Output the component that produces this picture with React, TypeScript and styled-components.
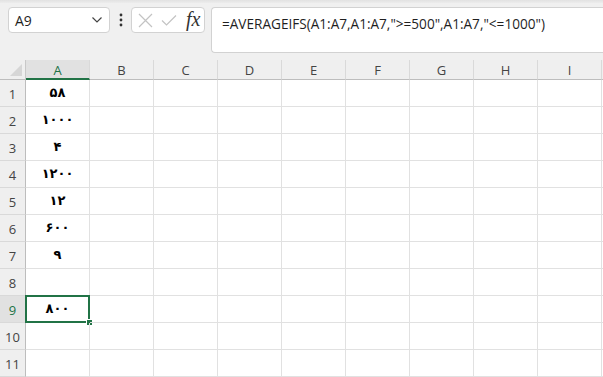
import React from "react";
import styled, { createGlobalStyle, css } from "styled-components";

const GlobalStyle = createGlobalStyle`
  html, body { margin: 0; padding: 0; background: #ffffff; overflow: hidden; }
  * { box-sizing: border-box; }
`;

const UI_FONT = `"Segoe UI", "Open Sans", "Noto Sans", "DejaVu Sans", sans-serif`;
const GREEN = "#217346";

const Page = styled.div`
  width: 603px;
  height: 377px;
  display: flex;
  flex-direction: column;
  background: #f0f0f0;
  font-family: ${UI_FONT};
  overflow: hidden;
`;

const TopStrip = styled.div`
  height: 3px;
  background: linear-gradient(#e2e2e2, #ececec);
  flex: none;
`;

const FormulaBar = styled.div`
  height: 57px;
  flex: none;
  display: flex;
  align-items: flex-start;
  padding: 4px 0 0 8px;
`;

const NameBox = styled.div`
  width: 102px;
  height: 26px;
  background: #ffffff;
  border: 1px solid #d2d2d2;
  border-radius: 4px;
  display: flex;
  align-items: center;
  justify-content: space-between;
  padding: 0 6px 0 6px;
  font-size: 14px;
  color: #1f1f1f;
`;

const Dots = styled.div`
  width: 21px;
  height: 26px;
  display: flex;
  align-items: center;
  justify-content: center;
`;

const ButtonBox = styled.div`
  width: 74px;
  height: 26px;
  background: #ffffff;
  border: 1px solid #d2d2d2;
  border-radius: 4px;
  display: flex;
  align-items: center;
  padding: 0 0 0 6px;
  gap: 8px;
`;

const Fx = styled.span`
  font-family: "Liberation Serif", "DejaVu Serif", serif;
  font-style: italic;
  font-size: 20px;
  color: #333;
  line-height: 1;
  margin-left: 1px;
  margin-top: -2px;
`;

const FormulaInput = styled.div`
  margin-left: 6px;
  flex: 1;
  height: 46px;
  background: #ffffff;
  border: 1px solid #d2d2d2;
  border-right: none;
  border-radius: 4px 0 0 4px;
  padding: 6px 0 0 10px;
  font-size: 13.6px;
  color: #1f1f1f;
  white-space: nowrap;
`;

const Sheet = styled.div`
  flex: 1;
  display: grid;
  grid-template-columns: 26px repeat(9, 64px) 1fr;
  grid-template-rows: 20px repeat(11, 27px);
  background: #ffffff;
`;

const Corner = styled.div`
  background: #efefef;
  border-right: 1px solid #c8c8c8;
  border-bottom: 1px solid #bdbdbd;
  position: relative;
`;

const CornerTri = styled.div`
  position: absolute;
  right: 3px;
  bottom: 3px;
  width: 0;
  height: 0;
  border-left: 12px solid transparent;
  border-bottom: 12px solid #d6d6d6;
`;

const ColHead = styled.div<{ $sel?: boolean }>`
  background: #efefef;
  border-right: 1px solid #d9d9d9;
  border-bottom: 1px solid #bdbdbd;
  display: flex;
  align-items: center;
  justify-content: center;
  font-size: 13px;
  color: #444;
  padding-top: 1px;
  ${(p) =>
    p.$sel &&
    css`
      background: #e1e1e1;
      color: ${GREEN};
      border-bottom: 2px solid ${GREEN};
    `}
`;

const RowHead = styled.div<{ $sel?: boolean }>`
  background: #efefef;
  border-right: 1px solid #bdbdbd;
  border-bottom: 1px solid #d9d9d9;
  display: flex;
  align-items: flex-end;
  justify-content: center;
  padding-bottom: 3px;
  font-size: 13px;
  color: #444;
  ${(p) =>
    p.$sel &&
    css`
      background: #e1e1e1;
      color: ${GREEN};
    `}
`;

const Cell = styled.div`
  position: relative;
  border-right: 1px solid #e1e1e1;
  border-bottom: 1px solid #e1e1e1;
  display: flex;
  align-items: center;
  justify-content: center;
  font-family: "DejaVu Sans", sans-serif;
  font-weight: bold;
  font-size: 13px;
  letter-spacing: -1px;
  color: #000;
  padding-bottom: 1px;
`;

const Filler = styled.div`
  border-bottom: 1px solid #e1e1e1;
`;

const HeadFiller = styled.div`
  background: #efefef;
  border-bottom: 1px solid #bdbdbd;
`;

const Selection = styled.div`
  position: absolute;
  top: -1px;
  left: -1px;
  right: -1px;
  bottom: -1px;
  border: 2px solid ${GREEN};
  pointer-events: none;
`;

const FillHandle = styled.div`
  position: absolute;
  right: -5px;
  bottom: -5px;
  width: 7px;
  height: 7px;
  background: ${GREEN};
  border: 1px solid #ffffff;
`;

const cols = ["A", "B", "C", "D", "E", "F", "G", "H", "I"];
const values: Record<number, string> = {
  1: "۵۸",
  2: "۱۰۰۰",
  3: "۴",
  4: "۱۲۰۰",
  5: "۱۲",
  6: "۶۰۰",
  7: "۹",
  9: "۸۰۰",
};

export default function App() {
  const rows = Array.from({ length: 11 }, (_, i) => i + 1);
  return (
    <>
      <GlobalStyle />
      <Page>
        <TopStrip />
        <FormulaBar>
          <NameBox>
            <span>A9</span>
            <svg width="12" height="8" viewBox="0 0 12 8">
              <path d="M1.5 1.5 L6 6 L10.5 1.5" fill="none" stroke="#444" strokeWidth="1.2" />
            </svg>
          </NameBox>
          <Dots>
            <svg width="4" height="14" viewBox="0 0 4 14">
              <circle cx="2" cy="2" r="1.4" fill="#333" />
              <circle cx="2" cy="7" r="1.4" fill="#333" />
              <circle cx="2" cy="12" r="1.4" fill="#333" />
            </svg>
          </Dots>
          <ButtonBox>
            <svg width="15" height="15" viewBox="0 0 15 15">
              <path d="M1 1 L14 14 M14 1 L1 14" stroke="#c3c3c3" strokeWidth="1.2" />
            </svg>
            <svg width="16" height="13" viewBox="0 0 16 13">
              <path d="M1 6.5 L5.5 11 L15 1.5" fill="none" stroke="#c3c3c3" strokeWidth="1.2" />
            </svg>
            <Fx>fx</Fx>
          </ButtonBox>
          <FormulaInput>=AVERAGEIFS(A1:A7,A1:A7,"&gt;=500",A1:A7,"&lt;=1000")</FormulaInput>
        </FormulaBar>
        <Sheet>
          <Corner>
            <CornerTri />
          </Corner>
          {cols.map((c) => (
            <ColHead key={c} $sel={c === "A"}>
              {c}
            </ColHead>
          ))}
          <HeadFiller />
          {rows.map((r) => (
            <React.Fragment key={r}>
              <RowHead $sel={r === 9}>{r}</RowHead>
              {cols.map((c) => (
                <Cell key={c}>
                  {c === "A" ? values[r] ?? "" : ""}
                  {c === "A" && r === 9 && (
                    <Selection>
                      <FillHandle />
                    </Selection>
                  )}
                </Cell>
              ))}
              <Filler />
            </React.Fragment>
          ))}
        </Sheet>
      </Page>
    </>
  );
}
